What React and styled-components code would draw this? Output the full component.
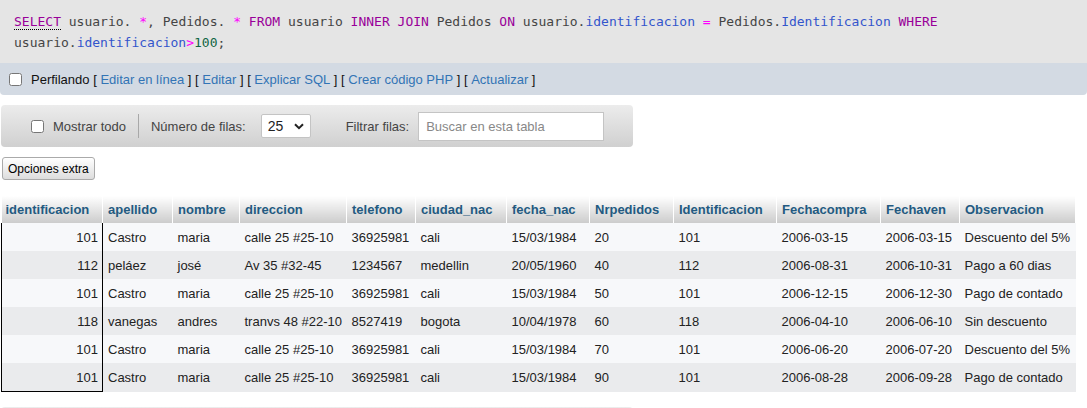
import React from "react";
import styled, { createGlobalStyle } from "styled-components";

const GlobalStyle = createGlobalStyle`
  body {
    margin: 0;
    font-family: "Liberation Sans", Arial, sans-serif;
    font-size: 13px;
    color: #222;
    background: #fff;
  }
`;

const SqlBox = styled.div`
  background: #e5e5e5;
  padding: 11px 14px 10px 14px;
  font-family: "DejaVu Sans Mono", monospace;
  font-size: 13px;
  line-height: 21px;
  color: #444;
`;

const SqlLine = styled.div`
  white-space: pre;
`;

const tokenColors = {
  keyword: "#990099",
  op: "#ff00ff",
  field: "#3355cc",
  number: "#116644",
  plain: "#444",
};

const Token = styled.span`
  color: ${(p) => tokenColors[p.$kind || "plain"]};
`;

const DocKeyword = styled(Token)`
  border-bottom: 1px dotted #000;
`;

const OptionsBar = styled.div`
  display: flex;
  align-items: center;
  height: 32px;
  padding: 0 9px;
  background: #d3dae3;
  border-radius: 0 0 4px 4px;
  color: #111;
  white-space: pre;
`;

const Check = styled.input.attrs({ type: "checkbox" })`
  width: 13px;
  height: 13px;
  margin: 0 ${(p) => p.$gap || 9}px 0 0;
`;

const Link = styled.a`
  color: #3274b5;
  text-decoration: none;
  cursor: pointer;
`;

const NavBar = styled.div`
  display: flex;
  align-items: center;
  width: 632px;
  height: 42px;
  margin: ${(p) => p.$top || 10}px 0 0 1px;
  padding-left: 30px;
  box-sizing: border-box;
  border-radius: 4px;
  background: linear-gradient(#ececec, #d0d0d0);
  color: #444;
`;

const NavText = styled.span`
  margin-right: ${(p) => p.$gap || 0}px;
`;

const Separator = styled.span`
  width: 1px;
  height: 24px;
  background: #a8a8a8;
  margin: 0 12px;
`;

const SelectWrap = styled.div`
  position: relative;
  margin-right: 35px;
`;

const Select = styled.select`
  appearance: none;
  width: 50px;
  height: 24px;
  padding: 0 0 0 6px;
  border: 1px solid #c4c4c4;
  border-radius: 2px;
  background: #fff;
  font-family: "Liberation Sans", Arial, sans-serif;
  font-size: 14px;
  color: #222;
`;

const Chevron = styled.svg`
  position: absolute;
  right: 7px;
  top: 9px;
  pointer-events: none;
`;

const SearchInput = styled.input`
  width: 186px;
  height: 29px;
  box-sizing: border-box;
  padding: 0 7px;
  border: 1px solid #c4c4c4;
  background: #fff;
  font-family: "Liberation Sans", Arial, sans-serif;
  font-size: 13px;
  color: #222;
  &::placeholder {
    color: #888;
  }
`;

const ExtraButton = styled.button`
  display: block;
  margin: 10px 0 0 2px;
  height: 23px;
  padding: 0 5px;
  border: 1px solid #aaa;
  border-radius: 3px;
  background: linear-gradient(#ffffff, #dddddd);
  font-family: "Liberation Sans", Arial, sans-serif;
  font-size: 12px;
  color: #000;
`;

const Table = styled.table`
  margin: 16px 0 0 1px;
  width: 1074px;
  table-layout: fixed;
  border-collapse: collapse;
`;

const Col = styled.col`
  width: ${(p) => p.$w}px;
`;

const Th = styled.th`
  height: 27px;
  padding: 0 5px;
  text-align: left;
  font-weight: bold;
  font-size: 13px;
  color: #235a81;
  background: linear-gradient(#ffffff, #cccccc);
  border-right: 1px solid #fff;
  white-space: nowrap;
  &:first-child {
    padding-left: 4px;
  }
`;

const Row = styled.tr`
  background: ${(p) => (p.$even ? "#eaebed" : "#f7f8fa")};
`;

const Td = styled.td`
  height: 28px;
  padding: 0 5px;
  white-space: nowrap;
  overflow: visible;
  color: #222;
  &:first-child {
    text-align: right;
    padding-right: 4px;
    border-left: 1px solid #000;
    border-right: 1px solid #000;
  }
  tr:last-child > &:first-child {
    border-bottom: 1px solid #000;
  }
`;

const columns = [
  ["identificacion", 101],
  ["apellido", 70],
  ["nombre", 67],
  ["direccion", 107],
  ["telefono", 69],
  ["ciudad_nac", 91],
  ["fecha_nac", 83],
  ["Nrpedidos", 84],
  ["Identificacion", 103],
  ["Fechacompra", 104],
  ["Fechaven", 79],
  ["Observacion", 116],
];

const rows = [
  ["101", "Castro", "maria", "calle 25 #25-10", "36925981", "cali", "15/03/1984", "20", "101", "2006-03-15", "2006-03-15", "Descuento del 5%"],
  ["112", "peláez", "josé", "Av 35 #32-45", "1234567", "medellin", "20/05/1960", "40", "112", "2006-08-31", "2006-10-31", "Pago a 60 dias"],
  ["101", "Castro", "maria", "calle 25 #25-10", "36925981", "cali", "15/03/1984", "50", "101", "2006-12-15", "2006-12-30", "Pago de contado"],
  ["118", "vanegas", "andres", "tranvs 48 #22-10", "8527419", "bogota", "10/04/1978", "60", "118", "2006-04-10", "2006-06-10", "Sin descuento"],
  ["101", "Castro", "maria", "calle 25 #25-10", "36925981", "cali", "15/03/1984", "70", "101", "2006-06-20", "2006-07-20", "Descuento del 5%"],
  ["101", "Castro", "maria", "calle 25 #25-10", "36925981", "cali", "15/03/1984", "90", "101", "2006-08-28", "2006-09-28", "Pago de contado"],
];

const actions = ["Editar en línea", "Editar", "Explicar SQL", "Crear código PHP", "Actualizar"];

const Navigation = ({ top }) => (
  <NavBar $top={top}>
    <Check />
    <NavText>Mostrar todo</NavText>
    <Separator />
    <NavText $gap={15}>Número de filas:</NavText>
    <SelectWrap>
      <Select defaultValue="25">
        <option>25</option>
        <option>50</option>
        <option>100</option>
      </Select>
      <Chevron width="10" height="7" viewBox="0 0 10 7">
        <path d="M1 1.2 L5 5.2 L9 1.2" fill="none" stroke="#222" strokeWidth="2" />
      </Chevron>
    </SelectWrap>
    <NavText $gap={9}>Filtrar filas:</NavText>
    <SearchInput placeholder="Buscar en esta tabla" />
  </NavBar>
);

const App = () => {
  return (
    <>
      <GlobalStyle />
      <SqlBox>
        <SqlLine>
          <DocKeyword $kind="keyword">SELECT</DocKeyword> usuario. <Token $kind="op">*</Token>, Pedidos.{" "}
          <Token $kind="op">*</Token> <Token $kind="keyword">FROM</Token> usuario{" "}
          <Token $kind="keyword">INNER JOIN</Token> Pedidos <Token $kind="keyword">ON</Token> usuario.
          <Token $kind="field">identificacion</Token> <Token $kind="op">=</Token> Pedidos.
          <Token $kind="field">Identificacion</Token> <Token $kind="keyword">WHERE</Token>
        </SqlLine>
        <SqlLine>
          usuario.<Token $kind="field">identificacion</Token>
          <Token $kind="op">&gt;</Token>
          <Token $kind="number">100</Token>;
        </SqlLine>
      </SqlBox>
      <OptionsBar>
        <Check />
        <span>Perfilando</span>
        {actions.map((a) => (
          <React.Fragment key={a}>
            <span>{" [ "}</span>
            <Link>{a}</Link>
            <span>{" ]"}</span>
          </React.Fragment>
        ))}
      </OptionsBar>
      <Navigation />
      <ExtraButton>Opciones extra</ExtraButton>
      <Table>
        <colgroup>
          {columns.map(([name, w]) => (
            <Col key={name} $w={w} />
          ))}
        </colgroup>
        <thead>
          <tr>
            {columns.map(([name]) => (
              <Th key={name}>{name}</Th>
            ))}
          </tr>
        </thead>
        <tbody>
          {rows.map((r, i) => (
            <Row key={i} $even={i % 2 === 1}>
              {r.map((v, j) => (
                <Td key={j}>{v}</Td>
              ))}
            </Row>
          ))}
        </tbody>
      </Table>
      <Navigation top={15} />
    </>
  );
};

export default App;
